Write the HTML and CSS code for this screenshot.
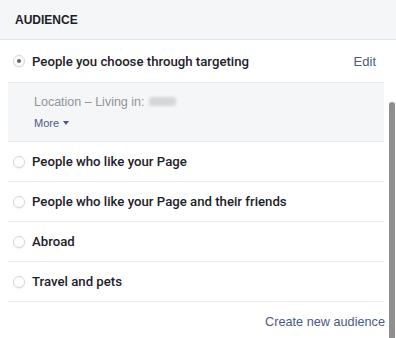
FILE: index.html
```html
<!DOCTYPE html>
<html>
<head>
<meta charset="utf-8">
<link rel="stylesheet" href="styles.css">
</head>
<body>
<div class="panel">
  <div class="header">AUDIENCE</div>
  <div class="list">
    <div class="row row-first">
      <span class="radio checked"></span>
      <span class="label">People you choose through targeting</span>
      <span class="edit">Edit</span>
    </div>
    <div class="details">
      <div class="loc">Location – Living in: <span class="blur"></span></div>
      <div class="more">More <span class="caret"></span></div>
    </div>
    <div class="row">
      <span class="radio"></span>
      <span class="label">People who like your Page</span>
    </div>
    <div class="row">
      <span class="radio"></span>
      <span class="label">People who like your Page and their friends</span>
    </div>
    <div class="row">
      <span class="radio"></span>
      <span class="label">Abroad</span>
    </div>
    <div class="row">
      <span class="radio"></span>
      <span class="label">Travel and pets</span>
    </div>
    <div class="footer">
      <span class="create">Create new audience</span>
    </div>
  </div>
  <div class="scrollbar"></div>
</div>
</body>
</html>
```

FILE: styles.css
```css
html, body {
  margin: 0;
  padding: 0;
  background: #ffffff;
}
body {
  font-family: "Liberation Sans", Arial, sans-serif;
  color: #1d2129;
  width: 396px;
  height: 338px;
  overflow: hidden;
}
.panel {
  position: relative;
  height: 338px;
}
.header {
  height: 39px;
  background: #f5f6f7;
  border-bottom: 1px solid #e3e5e8;
  display: flex;
  align-items: center;
  padding-left: 15px;
  font-size: 12px;
  font-weight: bold;
  color: #1d2129;
}
.list {
  margin: 0 12px 0 8px;
}
.row {
  height: 39px;
  border-bottom: 1px solid #e9ebee;
  display: flex;
  align-items: center;
  padding-left: 5px;
  padding-right: 8px;
}
.row-first {
  height: 42px;
}
.radio {
  width: 12px;
  height: 12px;
  border-radius: 50%;
  border: 1px solid #d3d6db;
  box-sizing: border-box;
  background: #fff;
  box-shadow: 0 1px 1px rgba(0,0,0,0.06);
  display: flex;
  align-items: center;
  justify-content: center;
  flex: none;
}
.radio.checked::after {
  content: "";
  width: 4px;
  height: 4px;
  border-radius: 50%;
  background: #606770;
}
.label {
  margin-left: 7px;
  font-family: Roboto, "Liberation Sans", sans-serif;
  font-size: 13.2px;
  font-weight: 500;
  color: #1d2129;
  flex: 1;
}
.edit {
  font-size: 13px;
  color: #4b5a84;
}
.details {
  background: #f5f6f7;
  height: 48px;
  border-bottom: 1px solid #e9ebee;
  padding-left: 26px;
  padding-top: 10px;
}
.loc {
  font-size: 12.5px;
  color: #90949c;
  display: flex;
  align-items: center;
  height: 17px;
}
.blur {
  display: inline-block;
  width: 27px;
  height: 9px;
  margin-left: 4px;
  background: #d4d6d9;
  border-radius: 3px;
  filter: blur(1.5px);
}
.more {
  margin-top: 6px;
  font-size: 11px;
  color: #4b5a84;
  display: flex;
  align-items: center;
  height: 13px;
}
.caret {
  display: inline-block;
  width: 0;
  height: 0;
  margin-left: 4px;
  border-left: 3.5px solid transparent;
  border-right: 3.5px solid transparent;
  border-top: 4px solid #4b5a84;
}
.footer {
  height: 40px;
  display: flex;
  align-items: center;
  justify-content: flex-end;
  margin-right: -1px;
}
.create {
  font-size: 12.7px;
  color: #4b5a84;
}
.scrollbar {
  position: absolute;
  left: 389px;
  top: 102px;
  width: 6px;
  height: 240px;
  border-radius: 3px;
  background: #8f8f8f;
}
```
